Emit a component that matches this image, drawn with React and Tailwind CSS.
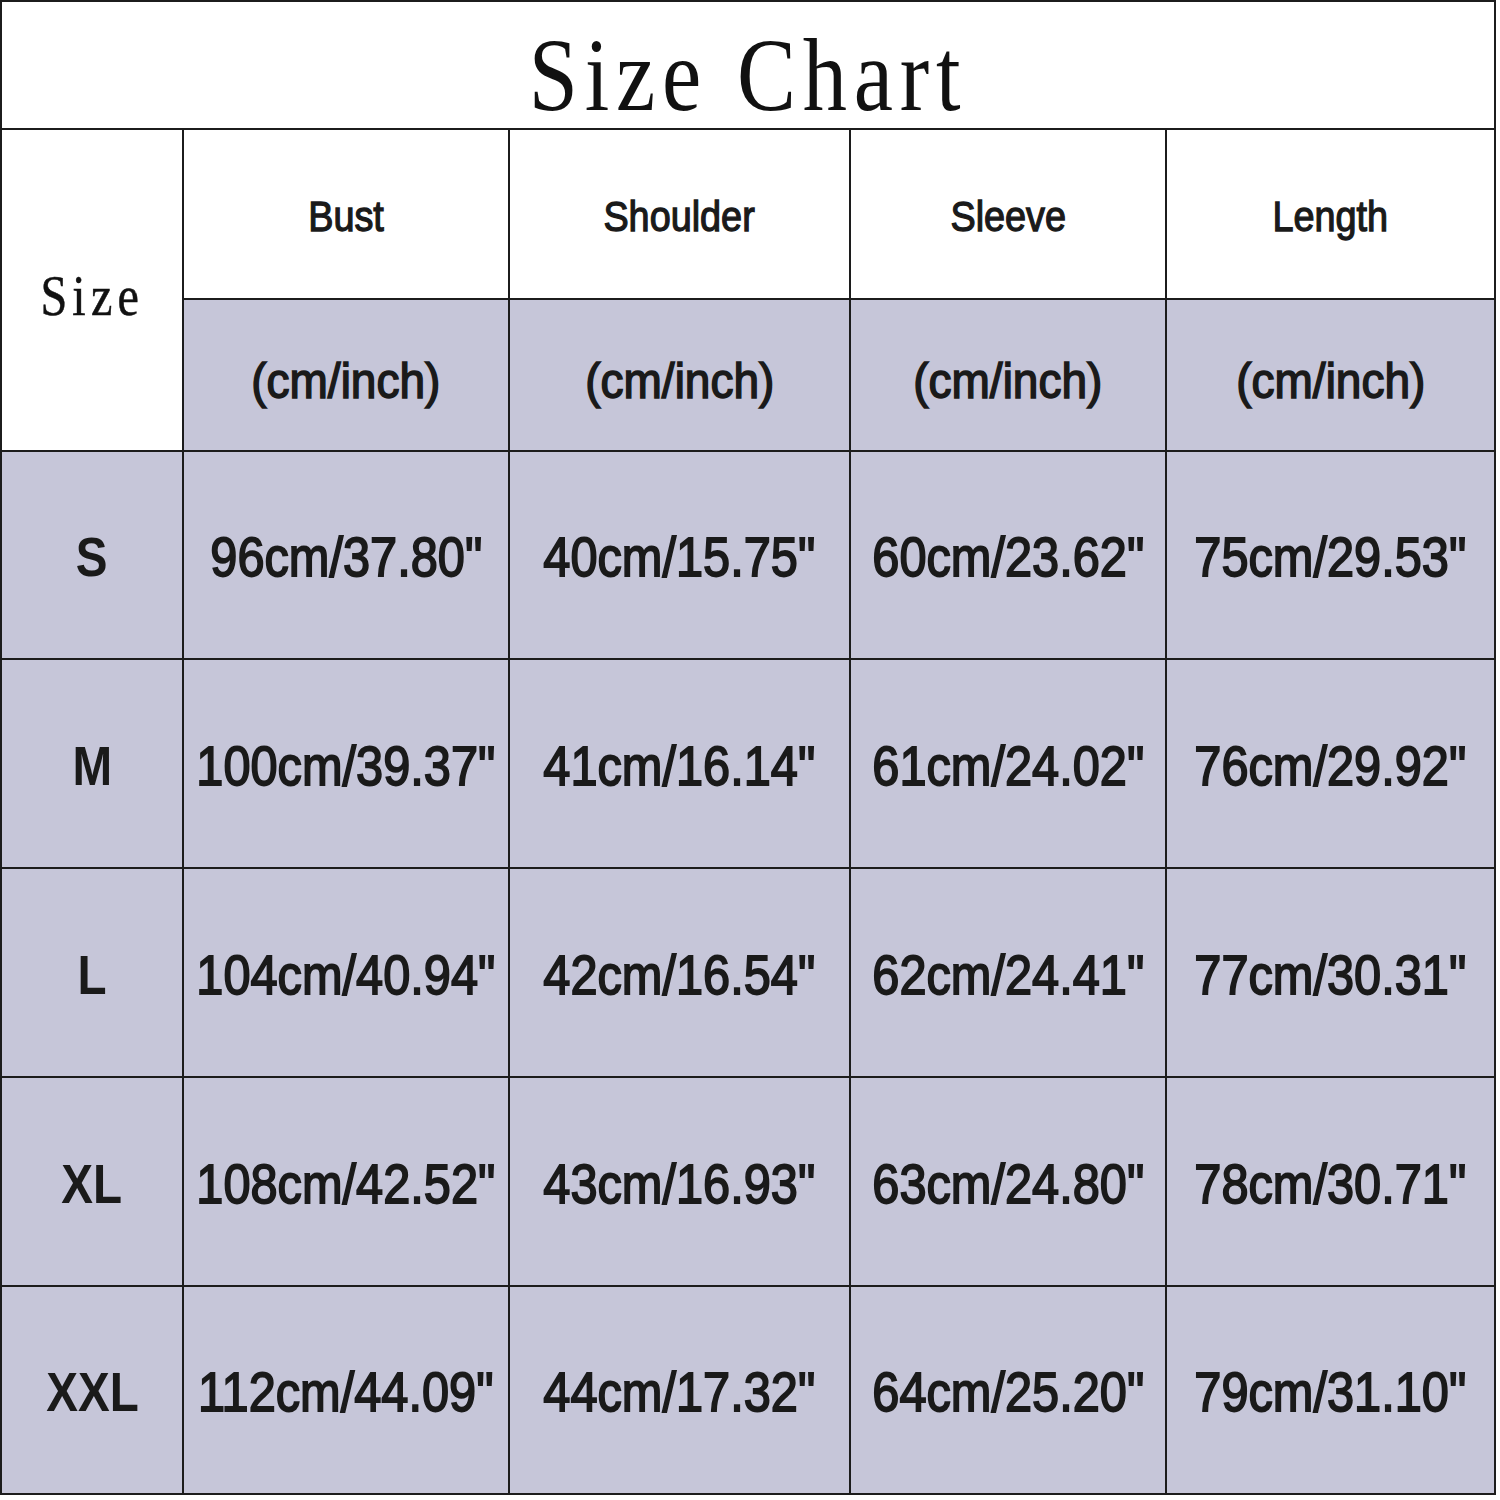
import React from "react";

const heads = ["Bust", "Shoulder", "Sleeve", "Length"];
const rows = [
  ["S", '96cm/37.80"', '40cm/15.75"', '60cm/23.62"', '75cm/29.53"'],
  ["M", '100cm/39.37"', '41cm/16.14"', '61cm/24.02"', '76cm/29.92"'],
  ["L", '104cm/40.94"', '42cm/16.54"', '62cm/24.41"', '77cm/30.31"'],
  ["XL", '108cm/42.52"', '43cm/16.93"', '63cm/24.80"', '78cm/30.71"'],
  ["XXL", '112cm/44.09"', '44cm/17.32"', '64cm/25.20"', '79cm/31.10"'],
];

const sans = "font-['Liberation_Sans',Arial,sans-serif]";

export default function App() {
  return (
    <div className="bg-white w-[1500px] h-[1500px]">
      <div className="grid grid-cols-[180px_324px_339px_314px_327px] grid-rows-[126px_168px_150px_206px_207px_207px_207px_206px] gap-[2px] p-[2px] bg-[#1c1c1c] w-[1496px]">
        <div className="col-span-5 bg-white flex items-center justify-center">
          <span className="inline-block font-['Liberation_Serif',serif] text-[104px] leading-none text-[#111] tracking-[8px] scale-x-[0.85] translate-y-[10px]">
            Size Chart
          </span>
        </div>
        <div className="row-span-2 bg-white flex items-center justify-center">
          <span className="inline-block font-['Liberation_Serif',serif] text-[56px] leading-none text-[#111] tracking-[6px] scale-x-[0.86] translate-y-[6px] [-webkit-text-stroke:0.5px_#111]">
            Size
          </span>
        </div>
        {heads.map((h) => (
          <div key={h} className="bg-white flex items-center justify-center">
            <span className={`inline-block ${sans} text-[42px] leading-none text-[#1a1a1a] scale-x-[0.9] translate-y-[3px] [-webkit-text-stroke:1.3px_#1a1a1a]`}>
              {h}
            </span>
          </div>
        ))}
        {heads.map((h) => (
          <div key={h + "u"} className="bg-[#c6c6d9] flex items-center justify-center">
            <span className={`inline-block ${sans} text-[50px] leading-none text-[#1a1a1a] scale-x-[0.92] [-webkit-text-stroke:1.6px_#1a1a1a] translate-y-[6px]`}>
              (cm/inch)
            </span>
          </div>
        ))}
        {rows.map((r) =>
          r.map((c, i) => (
            <div key={r[0] + i} className="bg-[#c6c6d9] flex items-center justify-center">
              <span className={`inline-block ${sans} text-[56px] leading-none text-[#1a1a1a] translate-y-[2px] ${i === 0 ? "scale-x-[0.85] font-bold" : "scale-x-[0.87] [-webkit-text-stroke:1.8px_#1a1a1a]"}`}>
                {c}
              </span>
            </div>
          ))
        )}
      </div>
    </div>
  );
}
